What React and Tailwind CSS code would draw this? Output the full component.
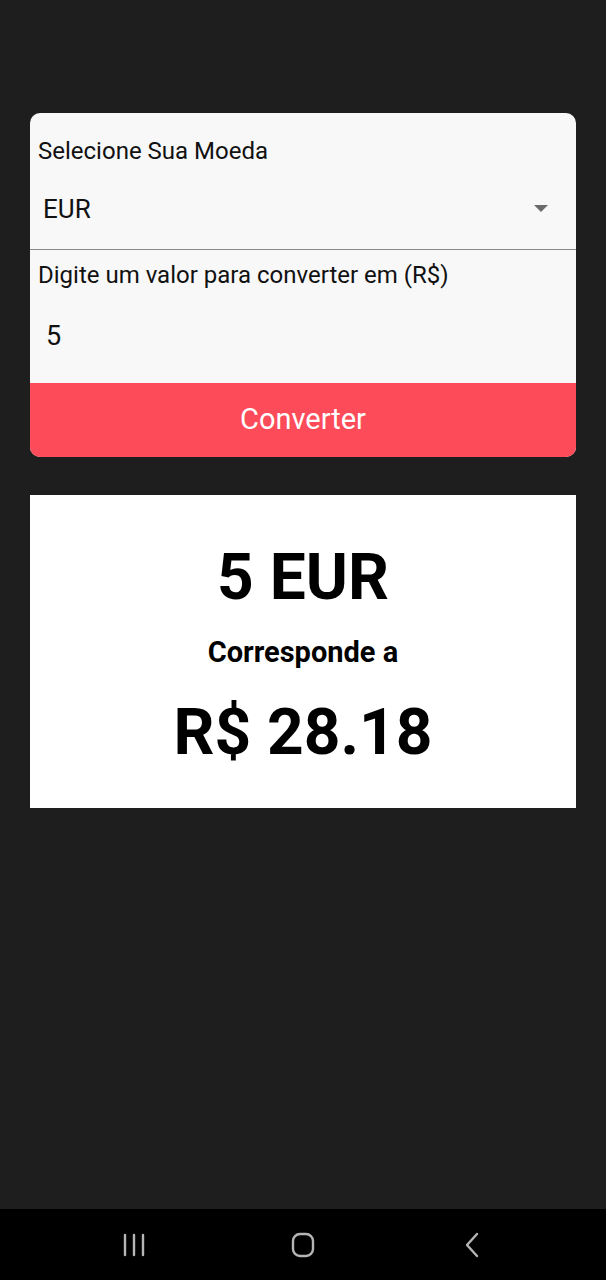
import React, { useState } from 'react';

const RATES = { EUR: 5.636, USD: 5.2, GBP: 6.5 };

function NavBar() {
  return (
    <nav className="mt-auto flex h-[71px] items-center justify-center bg-black text-[#b5b5b5]">
      <div className="flex w-[169px] justify-center">
        <svg width="26" height="24" viewBox="0 0 26 24" fill="none" stroke="currentColor" strokeWidth="2.4" strokeLinecap="round">
          <path d="M4 2v20M13 2v20M22 2v20" />
        </svg>
      </div>
      <div className="flex w-[169px] justify-center">
        <svg width="24" height="26" viewBox="0 0 24 26" fill="none" stroke="currentColor" strokeWidth="2.4">
          <rect x="2" y="2" width="20" height="22" rx="7" />
        </svg>
      </div>
      <div className="flex w-[169px] justify-center">
        <svg width="16" height="26" viewBox="0 0 16 26" fill="none" stroke="currentColor" strokeWidth="2.4" strokeLinecap="round" strokeLinejoin="round">
          <path d="M13 2 3 13l10 11" />
        </svg>
      </div>
    </nav>
  );
}

export default function App() {
  const [currency] = useState('EUR');
  const [value] = useState('5');
  const result = (Number(value) * RATES[currency]).toFixed(2);

  return (
    <div className="flex min-h-screen flex-col bg-[#1e1e1e] font-['Roboto',sans-serif]">
      <main className="px-[30px] pt-[113px]">
        <div className="overflow-hidden rounded-[10px] bg-[#f8f8f8]">
          <div className="h-[137px] border-b border-[#8a8a8a] pt-[24px]">
            <p className="pl-[8px] text-[24px] leading-[28px] text-[#111]">Selecione Sua Moeda</p>
            <div className="mt-[30px] flex h-[28px] items-center justify-between pl-[13px] pr-[28px]">
              <span className="text-[26px] text-[#111]">{currency}</span>
              <svg width="14" height="8" viewBox="0 0 14 8">
                <path d="M0 0h14L7 7z" fill="#6b6b6b" />
              </svg>
            </div>
          </div>
          <div className="h-[133px] pt-[11px]">
            <p className="pl-[8px] text-[24px] leading-[28px] text-[#111]">Digite um valor para converter em (R$)</p>
            <p className="mt-[33px] pl-[16px] text-[27px] leading-[28px] text-[#111]">{value}</p>
          </div>
          <button type="button" className="flex h-[74px] w-full items-center justify-center bg-[#fe4b59] text-[29px] text-white">
            Converter
          </button>
        </div>

        <section className="mt-[38px] flex flex-col items-center bg-white pb-[44px] pt-[52px] text-black">
          <p className="text-[64px] font-bold leading-[62px]">{value} {currency}</p>
          <p className="mt-[28px] text-[29px] font-bold leading-[30px]">Corresponde a</p>
          <p className="mt-[35px] text-[64px] font-bold leading-[62px]">R$ {result}</p>
        </section>
      </main>
      <NavBar />
    </div>
  );
}
